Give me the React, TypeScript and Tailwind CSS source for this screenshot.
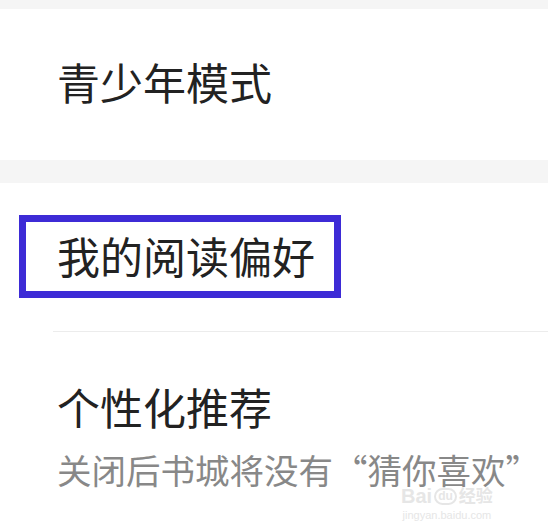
export default function App() {
  return (
    <div
      className="relative w-[548px] h-[532px] overflow-hidden bg-white"
      style={{ fontFamily: '"Noto Sans CJK SC", "Noto Sans", sans-serif' }}
    >
      <div className="h-[9px] bg-[#f5f5f5]" />
      <div className="h-[151px] flex items-center pl-[57px] pb-[7px]">
        <span className="text-[43px] leading-none text-[#222]">青少年模式</span>
      </div>
      <div className="h-[23px] bg-[#f5f5f5]" />
      <div className="pt-[32px]">
        <div className="ml-[19px] w-[322px] h-[83px] border-[7px] border-[#3d2bd6] flex items-center pl-[31px] pb-[2px]">
          <span className="text-[43px] leading-none text-[#222] whitespace-nowrap">我的阅读偏好</span>
        </div>
        <div className="mt-[33px] ml-[53px] h-px bg-[#ececec]" />
        <div className="pl-[57px] pt-[53px]">
          <div className="text-[43px] leading-none text-[#222] whitespace-nowrap">个性化推荐</div>
          <div className="mt-[24px] text-[34.5px] leading-none text-[#888] whitespace-nowrap">
            关闭后书城将没有“猜你喜欢”
          </div>
        </div>
      </div>
      <div className="absolute left-[401px] top-[488px] flex flex-col items-center text-[#e6e6e6] pointer-events-none">
        <div className="flex items-center gap-[2px] leading-none" style={{ fontFamily: '"Liberation Sans", "Noto Sans CJK SC", sans-serif' }}>
          <span className="text-[20px] font-bold leading-[15px]">Bai</span>
          <span className="text-[12px] font-bold leading-[13px] border-2 border-[#e6e6e6] rounded-full px-[2px]">du</span>
          <span className="text-[17px] font-bold leading-[15px]">经验</span>
        </div>
        <div className="text-[11px] leading-[10px] mt-[5px]" style={{ fontFamily: '"Liberation Sans", sans-serif' }}>
          jingyan.baidu.com
        </div>
      </div>
    </div>
  );
}
